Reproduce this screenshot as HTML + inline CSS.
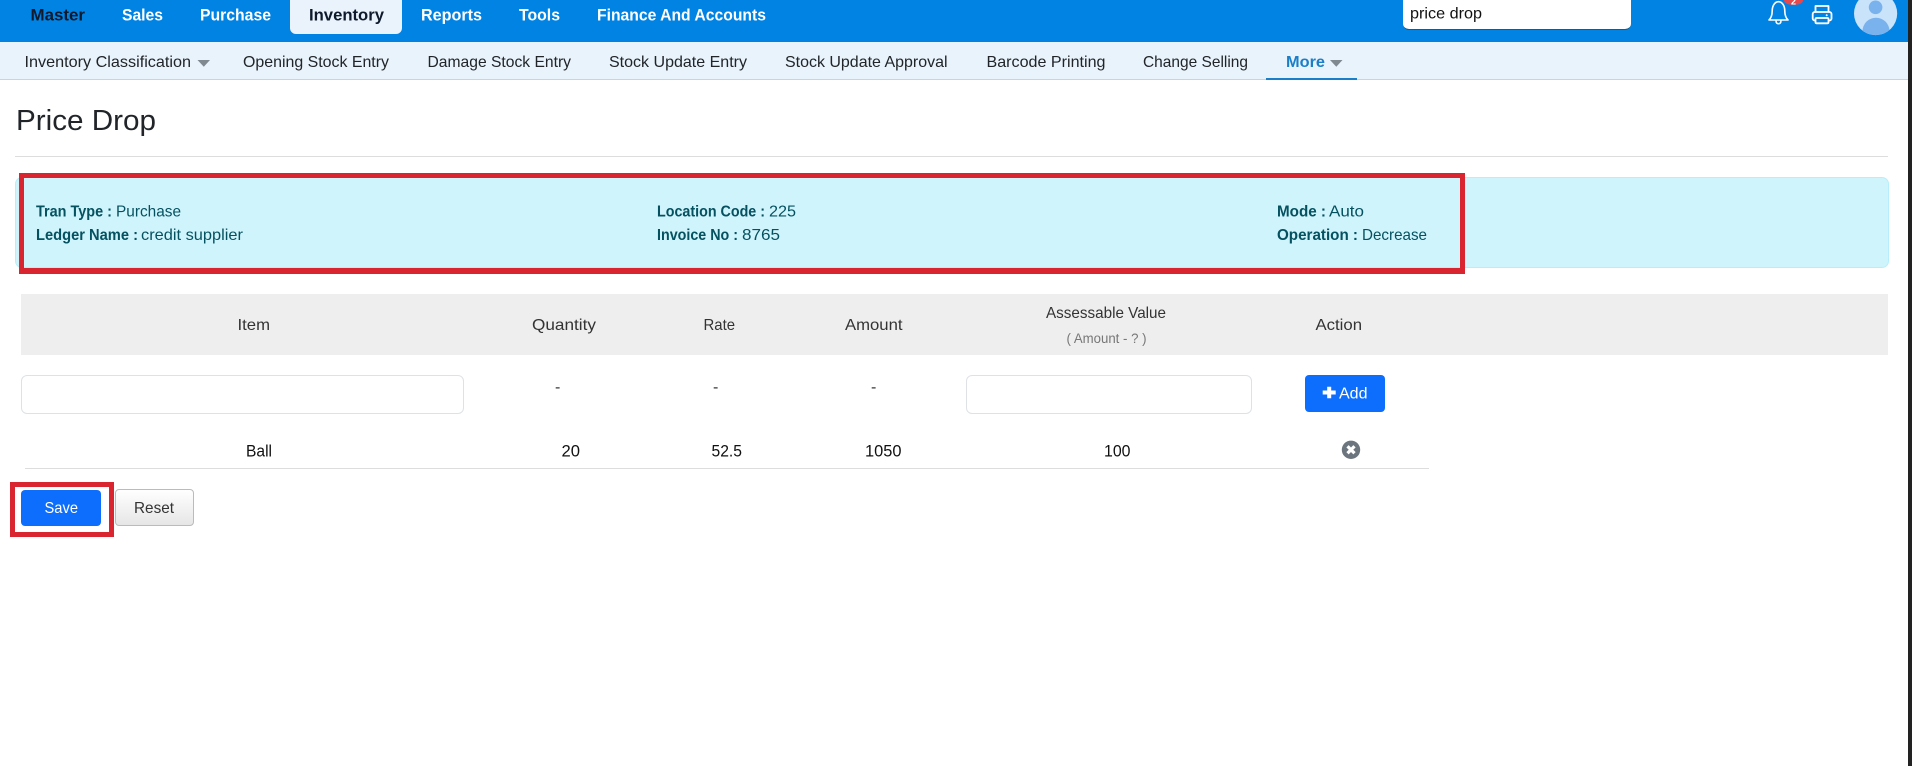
<!DOCTYPE html>
<html lang="en">
<head>
<meta charset="utf-8">
<title>Price Drop</title>
<style>
html,body{margin:0;padding:0;background:#fff;width:1912px;height:766px;overflow:hidden}
#p{position:relative;width:1912px;height:766px;overflow:hidden;font-family:"Liberation Sans",sans-serif}
.b{position:absolute;box-sizing:border-box}
svg{position:absolute;left:0;top:0}
text{font-family:"Liberation Sans",sans-serif}
.n{font-size:17px;font-weight:700;fill:#fff}
.s{font-size:16px;fill:#212529}
.a{font-size:16px;fill:#055160}
.ab{font-size:16px;fill:#055160;font-weight:700}
.t{font-size:16px;fill:#333}
.r{font-size:16.5px;fill:#111}
</style>
</head>
<body>
<div id="p">
  <div class="b" style="left:0;top:0;width:1912px;height:42px;background:#0183e4"></div>
  <div class="b" style="left:290px;top:0;width:112px;height:34px;background:#eaf3fb;border-radius:0 0 6px 6px"></div>
  <div class="b" style="left:0;top:42px;width:1912px;height:38px;background:#e9f3fb;border-bottom:1px solid #c8d4de"></div>
  <div class="b" style="left:1266px;top:78px;width:91px;height:2px;background:#1a7fc8"></div>
  <div class="b" style="left:1403px;top:-6px;width:228px;height:36px;background:#fff;border-radius:6px;border-bottom:1.5px solid #1a5a7a"></div>
  <div class="b" style="left:15px;top:156px;width:1873px;height:1px;background:#ddd"></div>
  <div class="b" style="left:15px;top:177px;width:1874px;height:91px;background:#cff4fc;border:1px solid #b6effb;border-radius:7px"></div>
  <div class="b" style="left:21px;top:294px;width:1867px;height:61px;background:#eee"></div>
  <div class="b" style="left:21px;top:375px;width:443px;height:39px;background:#fff;border:1px solid #dee2e6;border-radius:6px"></div>
  <div class="b" style="left:966px;top:375px;width:286px;height:39px;background:#fff;border:1px solid #dee2e6;border-radius:6px"></div>
  <div class="b" style="left:1305px;top:375px;width:80px;height:37px;background:#0d6efd;border-radius:4px"></div>
  <div class="b" style="left:25px;top:468px;width:1404px;height:1px;background:#ddd"></div>
  <div class="b" style="left:21px;top:490px;width:80px;height:36px;background:#0d6efd;border-radius:4px"></div>
  <div class="b" style="left:115px;top:489px;width:79px;height:37px;background:linear-gradient(#fff,#e6e6e6);border:1px solid #bbb;border-radius:4px"></div>
  <div class="b" style="left:19px;top:173px;width:1446px;height:101px;border:solid #d9252f;border-width:5px 5px 6px 5px"></div>
  <div class="b" style="left:10px;top:482px;width:104px;height:55px;border:5px solid #d9252f"></div>
  <div class="b" style="left:1908px;top:0;width:4px;height:766px;background:#222"></div>

  <svg width="1912" height="766" viewBox="0 0 1912 766" xmlns="http://www.w3.org/2000/svg">
    <text class="n" x="30.5" y="20.300" textLength="54.5" lengthAdjust="spacingAndGlyphs" style="fill:#0e1a2b">Master</text>
    <text class="n" x="122" y="20.300" textLength="41" lengthAdjust="spacingAndGlyphs">Sales</text>
    <text class="n" x="200" y="20.300" textLength="71" lengthAdjust="spacingAndGlyphs">Purchase</text>
    <text class="n" x="309" y="20.300" textLength="75" lengthAdjust="spacingAndGlyphs" style="fill:#0e1a2b">Inventory</text>
    <text class="n" x="421" y="20.300" textLength="61" lengthAdjust="spacingAndGlyphs">Reports</text>
    <text class="n" x="519" y="20.300" textLength="41" lengthAdjust="spacingAndGlyphs">Tools</text>
    <text class="n" x="597" y="20.300" textLength="169" lengthAdjust="spacingAndGlyphs">Finance And Accounts</text>
    <text x="1410" y="18.5" textLength="72" lengthAdjust="spacingAndGlyphs" style="font-size:16px;fill:#111">price drop</text>

    <text class="s" x="24.5" y="66.800" textLength="166.5" lengthAdjust="spacingAndGlyphs">Inventory Classification</text>
    <path d="M197.500 60h12.500l-6.200 6.800z" fill="#808890"/>
    <text class="s" x="243" y="66.800" textLength="146" lengthAdjust="spacingAndGlyphs">Opening Stock Entry</text>
    <text class="s" x="427.5" y="66.800" textLength="143.5" lengthAdjust="spacingAndGlyphs">Damage Stock Entry</text>
    <text class="s" x="609" y="66.800" textLength="138" lengthAdjust="spacingAndGlyphs">Stock Update Entry</text>
    <text class="s" x="785" y="66.800" textLength="162.5" lengthAdjust="spacingAndGlyphs">Stock Update Approval</text>
    <text class="s" x="986.5" y="66.800" textLength="119" lengthAdjust="spacingAndGlyphs">Barcode Printing</text>
    <text class="s" x="1143" y="66.800" textLength="105" lengthAdjust="spacingAndGlyphs">Change Selling</text>
    <text x="1286" y="66.800" textLength="39" lengthAdjust="spacingAndGlyphs" style="font-size:16px;font-weight:700;fill:#1a7fc8">More</text>
    <path d="M1330 60h12.500l-6.200 6.800z" fill="#808890"/>

    <!-- bell -->
    <path d="M1769 20c2.300-2.300 3.200-4.800 3.200-9 0-5 2.500-9.300 6.300-9.300s6.300 4.300 6.300 9.300c0 4.200.9 6.700 3.200 9z" fill="none" stroke="#fff" stroke-width="1.600" stroke-linejoin="round"/>
    <path d="M1776 20.500c0 2.100 1 3.300 2.500 3.300s2.500-1.200 2.500-3.300" fill="none" stroke="#fff" stroke-width="1.500"/>
    <path d="M1784 0h19c0 2.800-2.500 4.800-9.500 4.800s-9.500-2-9.500-4.800z" fill="#e5484d"/>
    <text x="1791" y="4.500" style="font-size:9px;fill:#fff;font-weight:700">2</text>
    <!-- printer -->
    <g fill="none" stroke="#fff" stroke-linejoin="round">
      <path d="M1815.500 12V6h13v6" stroke-width="1.800"/>
      <rect x="1812.700" y="12" width="18.800" height="8.500" rx="2" stroke-width="1.800"/>
      <rect x="1815.500" y="18" width="13" height="5.300" rx="1" fill="#0183e4" stroke-width="1.800"/>
    </g>
    <circle cx="1826.700" cy="15.300" r="1" fill="#fff"/>
    <!-- avatar -->
    <clipPath id="av"><circle cx="1875.600" cy="13.500" r="21.600"/></clipPath>
    <circle cx="1875.600" cy="13.500" r="21.600" fill="#c9e3fb"/>
    <circle cx="1875.600" cy="7.300" r="6.800" fill="#7ab2ee"/>
    <circle cx="1876" cy="31.200" r="13.500" fill="#7ab2ee" clip-path="url(#av)"/>

    <text x="16" y="130" textLength="140" lengthAdjust="spacingAndGlyphs" style="font-size:29px;fill:#212529">Price Drop</text>

    <text class="ab" x="36" y="216.300" textLength="76" lengthAdjust="spacingAndGlyphs">Tran Type :</text>
    <text class="a" x="116" y="216.300" textLength="65" lengthAdjust="spacingAndGlyphs">Purchase</text>
    <text class="ab" x="36" y="240" textLength="102" lengthAdjust="spacingAndGlyphs">Ledger Name :</text>
    <text class="a" x="141" y="240" textLength="102" lengthAdjust="spacingAndGlyphs">credit supplier</text>
    <text class="ab" x="657" y="216.300" textLength="108" lengthAdjust="spacingAndGlyphs">Location Code :</text>
    <text class="a" x="769" y="216.300" textLength="27" lengthAdjust="spacingAndGlyphs">225</text>
    <text class="ab" x="657" y="240" textLength="81" lengthAdjust="spacingAndGlyphs">Invoice No :</text>
    <text class="a" x="742" y="240" textLength="38" lengthAdjust="spacingAndGlyphs">8765</text>
    <text class="ab" x="1277" y="216.300" textLength="49" lengthAdjust="spacingAndGlyphs">Mode :</text>
    <text class="a" x="1329" y="216.300" textLength="35" lengthAdjust="spacingAndGlyphs">Auto</text>
    <text class="ab" x="1277" y="240" textLength="81" lengthAdjust="spacingAndGlyphs">Operation :</text>
    <text class="a" x="1362" y="240" textLength="65" lengthAdjust="spacingAndGlyphs">Decrease</text>

    <text class="t" x="237.500" y="330" textLength="32.500" lengthAdjust="spacingAndGlyphs">Item</text>
    <text class="t" x="532" y="330" textLength="64" lengthAdjust="spacingAndGlyphs">Quantity</text>
    <text class="t" x="703.500" y="330" textLength="31.500" lengthAdjust="spacingAndGlyphs">Rate</text>
    <text class="t" x="845" y="330" textLength="57.500" lengthAdjust="spacingAndGlyphs">Amount</text>
    <text class="t" x="1046" y="318" textLength="120" lengthAdjust="spacingAndGlyphs">Assessable Value</text>
    <text x="1066.500" y="343" textLength="80" lengthAdjust="spacingAndGlyphs" style="font-size:13.500px;fill:#777">( Amount - ? )</text>
    <text class="t" x="1315.500" y="330" textLength="46.500" lengthAdjust="spacingAndGlyphs">Action</text>

    <text class="t" x="555" y="392">-</text>
    <text class="t" x="713" y="392">-</text>
    <text class="t" x="871" y="392">-</text>

    <path d="M1329.200 386.700v11.600M1322.700 392.500h13" stroke="#fff" stroke-width="4"/>
    <text x="1339" y="398.500" textLength="28.500" lengthAdjust="spacingAndGlyphs" style="font-size:16px;fill:#fff">Add</text>

    <text class="r" x="246" y="456.500" textLength="26" lengthAdjust="spacingAndGlyphs">Ball</text>
    <text class="r" x="561.500" y="456.500" textLength="18.500" lengthAdjust="spacingAndGlyphs">20</text>
    <text class="r" x="711.500" y="456.500" textLength="30.500" lengthAdjust="spacingAndGlyphs">52.5</text>
    <text class="r" x="865" y="456.500" textLength="36.500" lengthAdjust="spacingAndGlyphs">1050</text>
    <text class="r" x="1104" y="456.500" textLength="26.500" lengthAdjust="spacingAndGlyphs">100</text>
    <circle cx="1351" cy="449.800" r="9.200" fill="#6c757d"/>
    <path d="M1347.500 446.300l7 7M1354.500 446.300l-7 7" stroke="#fff" stroke-width="3.200"/>

    <text x="44.500" y="513" textLength="33.500" lengthAdjust="spacingAndGlyphs" style="font-size:16px;fill:#fff">Save</text>
    <text x="134" y="513" textLength="40" lengthAdjust="spacingAndGlyphs" style="font-size:16px;fill:#333">Reset</text>
  </svg>
</div>
</body>
</html>
